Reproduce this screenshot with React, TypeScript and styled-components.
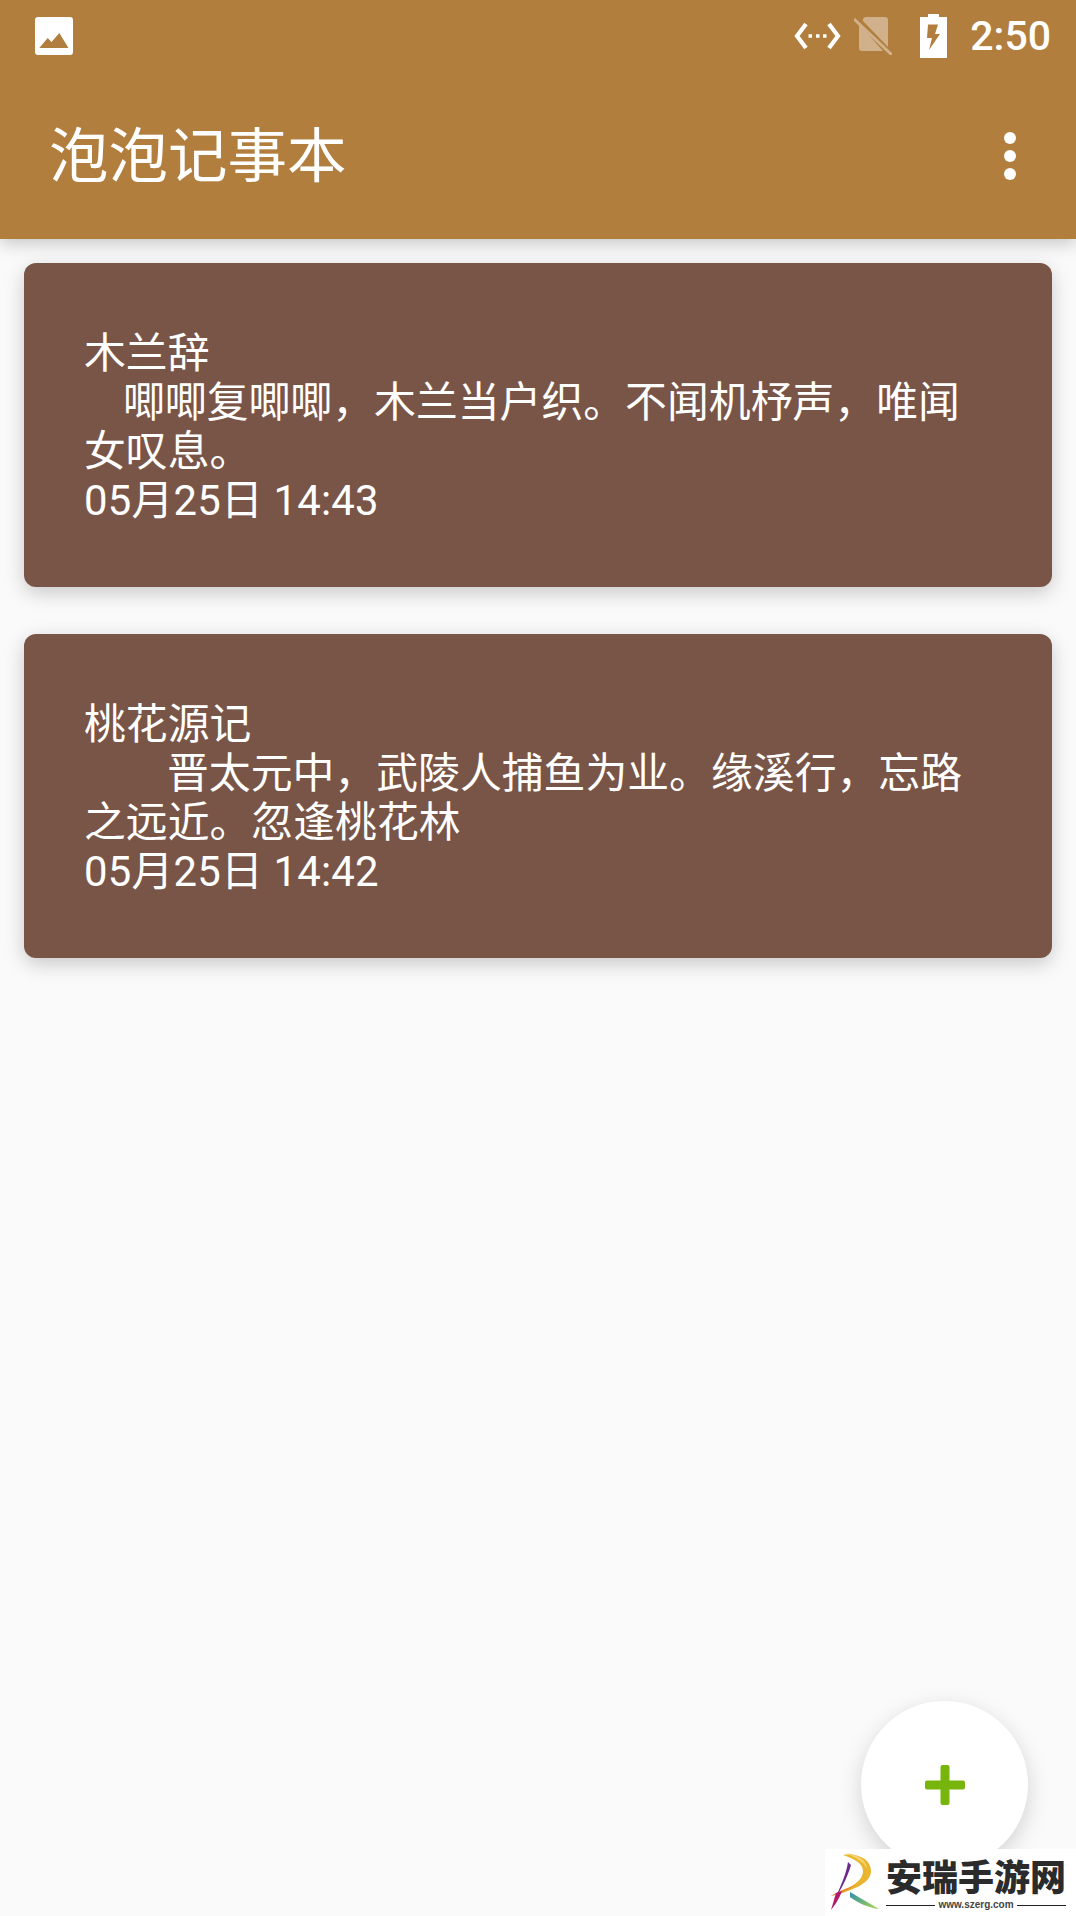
import styled, { createGlobalStyle } from 'styled-components';

const notes = [
    { title: '木兰辞', body: '唧唧复唧唧，木兰当户织。不闻机杼声，唯闻女叹息。', date: '05月25日 14:43', indent: 39 },
    { title: '桃花源记', body: '晋太元中，武陵人捕鱼为业。缘溪行，忘路之远近。忽逢桃花林', date: '05月25日 14:42', indent: 83 },
];

function App() {
    return (
        <Screen>
            <GlobalStyle />
            <AppBar>
                <StatusBar>
                    <svg width="38" height="38" viewBox="0 0 38 38">
                        <path fill="#fff" fillRule="evenodd" d="M3 0h32a3 3 0 0 1 3 3v32a3 3 0 0 1-3 3H3a3 3 0 0 1-3-3V3a3 3 0 0 1 3-3zM4.300 31h29.200L24.300 16l-7.800 9-3.800-4z" />
                    </svg>
                    <StatusRight>
                        <svg width="47" height="28" viewBox="0 0 47 28" fill="none" stroke="#fff" strokeWidth="4.200">
                            <path d="M12 2 3 14l9 12M35 2l9 12-9 12" />
                            <path d="M14.500 14h3.500M22 14h3.500M29 14h3.500" strokeWidth="3.600" />
                        </svg>
                        <SimIcon width="38" height="38" viewBox="0 0 38 38">
                            <path fill="#fff" d="M9 3a3 3 0 0 1 3-3h19a3 3 0 0 1 3 3v27L8.500 3.500z" />
                            <path fill="#fff" d="M5 7l24 27H8a3 3 0 0 1-3-3z" />
                            <path stroke="#fff" strokeWidth="3" d="M0 2l38 36" />
                        </SimIcon>
                        <svg width="27" height="44" viewBox="0 0 27 44">
                            <path fill="#fff" fillRule="evenodd" d="M8 0h11v3h8v41H0V3h8zM8 10.500 7 24h5l-3 12 11-16h-5l3-9.500z" />
                        </svg>
                        <Clock>2:50</Clock>
                    </StatusRight>
                </StatusBar>
                <Toolbar>
                    <Title>泡泡记事本</Title>
                    <MoreMenu>
                        <i />
                        <i />
                        <i />
                    </MoreMenu>
                </Toolbar>
            </AppBar>
            <NoteList>
                {notes.map((note) => (
                    <NoteCard key={note.title}>
                        <div>{note.title}</div>
                        <NoteBody $indent={note.indent}>{note.body}</NoteBody>
                        <NoteDate>{note.date}</NoteDate>
                    </NoteCard>
                ))}
            </NoteList>
            <AddButton>
                <svg width="40" height="40" viewBox="0 0 40 40">
                    <path fill="#78b50c" d="M15.500 2a2 2 0 0 1 2-2h5a2 2 0 0 1 2 2v13.500H38a2 2 0 0 1 2 2v5a2 2 0 0 1-2 2H24.500V38a2 2 0 0 1-2 2h-5a2 2 0 0 1-2-2V24.500H2a2 2 0 0 1-2-2v-5a2 2 0 0 1 2-2h13.500z" />
                </svg>
            </AddButton>
            <Watermark>
                <svg width="56" height="62" viewBox="0 0 56 62">
                    <defs>
                        <linearGradient id="tail" x1="0" y1="0" x2="1" y2="0.600">
                            <stop offset="0" stopColor="#2f8fa8" />
                            <stop offset="1" stopColor="#9ccf5a" />
                        </linearGradient>
                    </defs>
                    <path fill="#e9b52f" d="M17 4C31 2 45 8 45 20 45 31 30 39 5 45 20 38 37 32 37 20 37 12 28 8 17 4z" />
                    <path fill="#f3d26a" d="M20 2C34 4 41 10 41 18 38 11 30 7 20 2z" />
                    <path fill="#e58a2a" d="M5 45C14 39 22 37 30 34 22 39 14 43 5 45z" />
                    <path fill="#6b2a8c" d="M22 11C20 25 13 38 10 46 14 40 21 28 25 14z" />
                    <path fill="#b01a6c" d="M10 42 5 59C9 54 13 48 16 40z" />
                    <path fill="url(#tail)" d="M24 41 53 58C43 57 32 52 24 46z" />
                </svg>
                <WatermarkText>
                    <WatermarkName>安瑞手游网</WatermarkName>
                    <WatermarkUrl>www.szerg.com</WatermarkUrl>
                </WatermarkText>
            </Watermark>
        </Screen>
    )
}
export default App

const GlobalStyle = createGlobalStyle`
    html, body {
        margin: 0;
        padding: 0;
        background: #fafafa;
    }
`

const Screen = styled.div`
    position: relative;
    width: 1076px;
    height: 1916px;
    overflow: hidden;
    background: #fafafa;
    font-family: Roboto, "Noto Sans CJK SC", sans-serif;
    color: #fff;
`

const AppBar = styled.header`
    height: 239px;
    background: #b27e3e;
    box-shadow: 0 5px 16px rgba(0, 0, 0, 0.2);
`

const StatusBar = styled.div`
    height: 72px;
    padding: 0 25px 0 35px;
    box-sizing: border-box;
    display: flex;
    justify-content: space-between;
    align-items: center;
`

const StatusRight = styled.div`
    display: flex;
    align-items: center;
`

const SimIcon = styled.svg`
    opacity: 0.4;
    margin: 0 28px 0 13px;
`

const Clock = styled.span`
    margin-left: 23px;
    font-size: 41px;
    font-weight: 500;
    line-height: 44px;
`

const Toolbar = styled.div`
    height: 167px;
    padding: 0 60px 0 49px;
    display: flex;
    justify-content: space-between;
    align-items: center;
`

const Title = styled.h1`
    margin: 2px 0 0;
    font-size: 59.500px;
    font-weight: 400;
    line-height: 80px;
`

const MoreMenu = styled.div`
    display: flex;
    flex-direction: column;
    gap: 6px;

    i {
        display: block;
        width: 12px;
        height: 12px;
        border-radius: 50%;
        background: #fff;
    }
`

const NoteList = styled.main`
    display: flex;
    flex-direction: column;
    gap: 47px;
    padding: 24px 24px 0;
`

const NoteCard = styled.article`
    height: 324px;
    box-sizing: border-box;
    padding: 66px 60px 0;
    background: #795548;
    border-radius: 12px;
    box-shadow: 0 6px 20px rgba(0, 0, 0, 0.2);
    font-size: 41.850px;
    line-height: 49px;
`

const NoteBody = styled.div<{ $indent: number }>`
    text-indent: ${(p) => p.$indent}px;
`

const NoteDate = styled.div`
    letter-spacing: 0.2px;
`

const AddButton = styled.button`
    position: absolute;
    left: 861px;
    top: 1701px;
    width: 167px;
    height: 167px;
    padding: 0;
    border: none;
    border-radius: 50%;
    background: #fff;
    box-shadow: 0 7px 22px rgba(0, 0, 0, 0.16);
    display: flex;
    align-items: center;
    justify-content: center;
`

const Watermark = styled.div`
    position: absolute;
    left: 825px;
    top: 1849px;
    width: 251px;
    height: 67px;
    box-sizing: border-box;
    padding: 2px 0 0 1px;
    background: #fff;
    display: flex;
    gap: 4px;
`

const WatermarkText = styled.div`
    display: flex;
    flex-direction: column;
    padding-top: 5px;
`

const WatermarkName = styled.div`
    font-family: "Noto Sans CJK SC", sans-serif;
    font-size: 36px;
    font-weight: 900;
    line-height: 38px;
    color: #2b2b2b;
    white-space: nowrap;
`

const WatermarkUrl = styled.div`
    display: flex;
    align-items: center;
    gap: 3px;
    width: 180px;
    margin-top: 5px;
    font-family: "Liberation Sans", sans-serif;
    font-size: 10px;
    font-weight: 700;
    line-height: 12px;
    color: #444;

    &::before, &::after {
        content: "";
        flex: 1;
        height: 1px;
        background: #222;
    }
`
